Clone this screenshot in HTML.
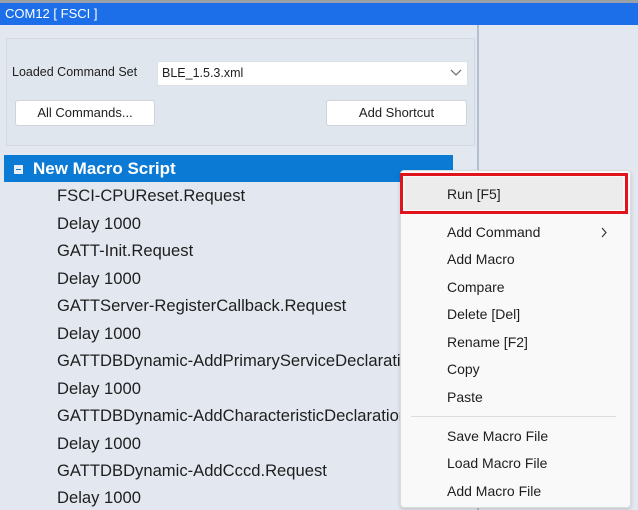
<!DOCTYPE html>
<html><head><style>
*{margin:0;padding:0;box-sizing:border-box}
body{width:638px;height:510px;overflow:hidden;background:#e3e8f0;font-family:"Liberation Sans",sans-serif;position:relative}
.a{position:absolute}
.t{position:absolute;left:57px;font-size:16.6px;color:#1e1e1e;white-space:nowrap;line-height:18px}
.m{position:absolute;left:447px;font-size:14px;color:#1e1e1e;line-height:16px;white-space:nowrap}
.btn{position:absolute;background:#fff;border:1px solid #cfd4da;border-radius:3px;font-size:13px;color:#1e1e1e;text-align:center;line-height:24px}
</style></head><body>
<div class="a" style="left:0;top:0;width:638px;height:3px;background:#9aa0a8"></div>
<div class="a" style="left:0;top:3px;width:638px;height:22px;background:#1c6fe8"></div>
<div class="a" style="left:5px;top:6px;color:#fff;font-size:13px">COM12 [ FSCI ]</div>
<div class="a" style="left:477px;top:25px;width:2px;height:485px;background:#b3bfcf"></div>
<div class="a" style="left:6px;top:38px;width:469px;height:108px;border:1px solid #d3d9e2;background:#e0e6ee"></div>
<div class="a" style="left:12px;top:65px;font-size:12.5px;color:#1e1e1e">Loaded Command Set</div>
<div class="a" style="left:157px;top:61px;width:311px;height:25px;background:#fff;border:1px solid #dde1e6;border-radius:2px"></div>
<div class="a" style="left:162px;top:66px;font-size:12.5px;color:#1e1e1e">BLE_1.5.3.xml</div>
<svg class="a" style="left:450px;top:69px" width="12" height="8"><path d="M1 1l5 5 5-5" stroke="#777" fill="none" stroke-width="1.3"/></svg>
<div class="btn" style="left:15px;top:100px;width:140px;height:26px">All Commands...</div>
<div class="btn" style="left:326px;top:100px;width:141px;height:26px">Add Shortcut</div>
<div class="a" style="left:4px;top:155px;width:449px;height:27px;background:#0a7ad4"></div>
<div class="a" style="left:14px;top:165px;width:9px;height:9px;background:#e8eef6"></div>
<div class="a" style="left:16px;top:169px;width:5px;height:1px;background:#0a7ad4"></div>
<div class="a" style="left:33px;top:159px;color:#fff;font-weight:bold;font-size:17px">New Macro Script</div>
<div class="t" style="top:187px">FSCI-CPUReset.Request</div>
<div class="t" style="top:215px">Delay 1000</div>
<div class="t" style="top:242px">GATT-Init.Request</div>
<div class="t" style="top:270px">Delay 1000</div>
<div class="t" style="top:297px">GATTServer-RegisterCallback.Request</div>
<div class="t" style="top:325px">Delay 1000</div>
<div class="t" style="top:352px">GATTDBDynamic-AddPrimaryServiceDeclaration</div>
<div class="t" style="top:380px">Delay 1000</div>
<div class="t" style="top:407px">GATTDBDynamic-AddCharacteristicDeclaration</div>
<div class="t" style="top:435px">Delay 1000</div>
<div class="t" style="top:462px">GATTDBDynamic-AddCccd.Request</div>
<div class="t" style="top:489px">Delay 1000</div>
<div class="a" style="left:400px;top:170px;width:231px;height:338px;background:#f9f9f9;border:1px solid #dcdcdc;border-radius:4px;box-shadow:0 2px 4px rgba(0,0,0,.15)"></div>
<div class="a" style="left:405px;top:177px;width:218px;height:33px;background:#ececec"></div>
<div class="a" style="left:400px;top:173px;width:228px;height:41px;border:3px solid #e0141c"></div>
<div class="m" style="top:186px">Run [F5]</div>
<div class="m" style="top:224px">Add Command</div>
<svg class="a" style="left:600px;top:227px" width="8" height="11"><path d="M2 1l4 4.5-4 4.5" stroke="#333" fill="none" stroke-width="1.2"/></svg>
<div class="m" style="top:251px">Add Macro</div>
<div class="m" style="top:279px">Compare</div>
<div class="m" style="top:306px">Delete [Del]</div>
<div class="m" style="top:334px">Rename [F2]</div>
<div class="m" style="top:361px">Copy</div>
<div class="m" style="top:389px">Paste</div>
<div class="a" style="left:411px;top:416px;width:205px;height:1px;background:#dcdcdc"></div>
<div class="m" style="top:428px">Save Macro File</div>
<div class="m" style="top:455px">Load Macro File</div>
<div class="m" style="top:483px">Add Macro File</div>
</body></html>
